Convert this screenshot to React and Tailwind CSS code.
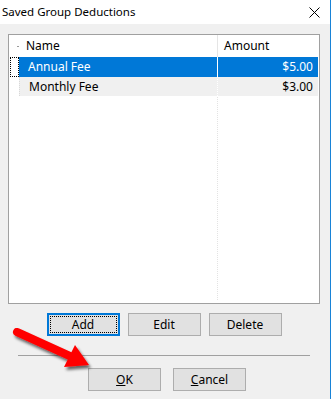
import React from "react";

const font = { fontFamily: '"Segoe UI", "Noto Sans", "Liberation Sans", sans-serif' };

function Btn({ children, focused, w = "w-[73px]" }) {
  if (focused) {
    return (
      <div className={`${w} h-[23px] border-2 border-[#0078d7] bg-[#e1e1e1] p-px`}>
        <div className="w-full h-full border border-dotted border-black flex items-center justify-center text-[12px] text-black">
          {children}
        </div>
      </div>
    );
  }
  return (
    <div className={`${w} h-[23px] border border-[#adadad] bg-[#e1e1e1] flex items-center justify-center text-[12px] text-black`}>
      {children}
    </div>
  );
}

export default function App() {
  return (
    <div className="relative w-[331px] h-[399px] bg-[#f0f0f0] flex overflow-hidden" style={font}>
      <div className="flex-1 flex flex-col">
        {/* Title bar */}
        <div className="h-[24px] bg-white flex items-center justify-between">
          <span className="text-[11.5px] text-black pl-[2px] leading-none">Saved Group Deductions</span>
          <svg width="11" height="11" viewBox="0 0 11 11" className="mr-[10px]">
            <path d="M0.5 0.5 L10.5 10.5 M10.5 0.5 L0.5 10.5" stroke="#000" strokeWidth="1" />
          </svg>
        </div>

        {/* List panel */}
        <div className="ml-[8px] mt-[10px] w-[312px] h-[270px] border border-[#a0a0a0] bg-white flex flex-col">
          {/* header */}
          <div className="h-[22px] flex text-[12px] text-black">
            <div className="w-[10px] flex items-center justify-end">
              <span className="w-[2px] h-px bg-[#9a9a9a]" />
            </div>
            <div className="w-[198px] flex items-center pl-[7px]">Name</div>
            <div className="w-px bg-[#e5e5e5]" />
            <div className="flex-1 flex items-center pl-[6px]">Amount</div>
          </div>
          {/* row 1 */}
          <div className="h-[20px] flex text-[12px]">
            <div className="w-[10px] flex">
              <div className="ml-px w-[9px] h-[20px] border border-dotted border-black" />
            </div>
            <div className="w-[198px] bg-[#0078d7] text-white flex items-center pl-[9px]">Annual Fee</div>
            <div className="w-px bg-white" />
            <div className="w-[100px] bg-[#0078d7] text-white flex items-center justify-end pr-[5px]">$5.00</div>
          </div>
          {/* row 2 */}
          <div className="h-[20px] flex text-[12px] text-black border-b border-dotted border-[#ffffff]">
            <div className="w-[10px]" />
            <div className="w-[198px] bg-[#f0f0f0] flex items-center pl-[9px] border-l border-dotted border-[#d8d8d8]">Monthly Fee</div>
            <div className="w-px bg-[#f0f0f0] border-l border-dotted border-white" />
            <div className="w-[100px] bg-[#f0f0f0] flex items-center justify-end pr-[5px]">$3.00</div>
          </div>
          {/* empty area with column line */}
          <div className="flex-1 flex pb-[3px]">
            <div className="w-[10px]" />
            <div className="w-[198px]" />
            <div className="w-px border-l border-dotted border-[#e3e3e3]" />
          </div>
        </div>

        {/* Buttons */}
        <div className="ml-[8px] w-[312px] mt-[9px] flex justify-center gap-[8px]">
          <Btn focused>Add</Btn>
          <Btn>Edit</Btn>
          <Btn>Delete</Btn>
        </div>

        {/* separator */}
        <div className="ml-[18px] w-[292px] mt-[19px] h-px bg-[#a0a0a0]" />

        {/* OK / Cancel */}
        <div className="mt-[12px] flex gap-[12px] pl-[88px]">
          <Btn>
            <span><span className="underline">O</span>K</span>
          </Btn>
          <Btn>
            <span><span className="underline">C</span>ancel</span>
          </Btn>
        </div>
      </div>
      <div className="w-px bg-[#1883d7]" />

      {/* Red arrow annotation */}
      <svg className="absolute left-0 top-0 pointer-events-none" width="331" height="399" viewBox="0 0 331 399">
        <defs>
          <filter id="sh" x="-20%" y="-20%" width="140%" height="140%">
            <feGaussianBlur in="SourceAlpha" stdDeviation="1.5" />
            <feOffset dx="2" dy="3" result="b" />
            <feComponentTransfer>
              <feFuncA type="linear" slope="0.6" />
            </feComponentTransfer>
            <feMerge>
              <feMergeNode />
              <feMergeNode in="SourceGraphic" />
            </feMerge>
          </filter>
        </defs>
        <g filter="url(#sh)">
          <line x1="17" y1="332" x2="72" y2="357" stroke="#ff0000" strokeWidth="8" strokeLinecap="round" />
          <polygon points="64,367 75,345 89,365" fill="#ff0000" />
        </g>
      </svg>
    </div>
  );
}
